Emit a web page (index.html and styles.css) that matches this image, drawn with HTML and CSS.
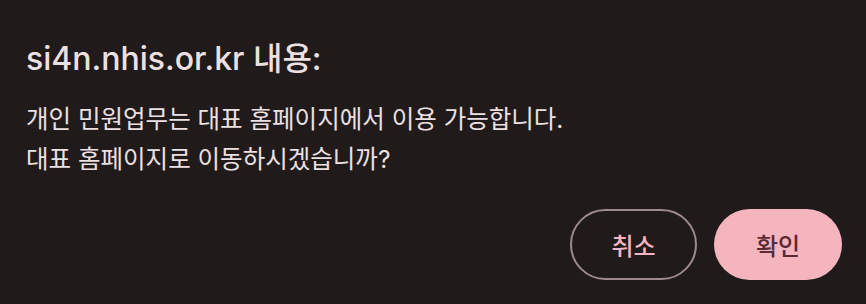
FILE: index.html
```html
<!DOCTYPE html>
<html lang="ko">
<head>
<meta charset="utf-8">
<link rel="stylesheet" href="styles.css">
</head>
<body>
<div class="dialog">
  <h1 class="title">si4n.nhis.or.kr 내용:</h1>
  <div class="message">
    <p>개인 민원업무는 대표 홈페이지에서 이용 가능합니다.</p>
    <p>대표 홈페이지로 이동하시겠습니까?</p>
  </div>
  <div class="actions">
    <button class="btn btn-outline">취소</button>
    <button class="btn btn-filled">확인</button>
  </div>
</div>
</body>
</html>
```
FILE: styles.css
```css
html, body {
  margin: 0;
  padding: 0;
  background: #201a1b;
  width: 866px;
  height: 304px;
  overflow: hidden;
}
.dialog {
  box-sizing: border-box;
  padding: 38px 24px 0 26px;
  font-family: Inter, "Noto Sans CJK KR", sans-serif;
  color: #ece0e1;
}
.title {
  margin: 0;
  font-size: 32px;
  font-weight: 500;
  line-height: 42px;
}
.message {
  margin-top: 19px;
  font-size: 24.5px;
  line-height: 40px;
  font-weight: 400;
}
.message p {
  margin: 0;
}
.actions {
  display: flex;
  justify-content: flex-end;
  gap: 17px;
  margin-top: 30px;
}
.btn {
  box-sizing: border-box;
  height: 71px;
  border-radius: 36px;
  font-family: Inter, "Noto Sans CJK KR", sans-serif;
  font-size: 24px;
  font-weight: 500;
  padding: 0;
}
.btn-outline {
  width: 127px;
  background: transparent;
  border: 2px solid #9e8a8c;
  color: #f5b5be;
}
.btn-filled {
  width: 128px;
  background: #f5b5be;
  border: none;
  color: #5b2a33;
}
```
